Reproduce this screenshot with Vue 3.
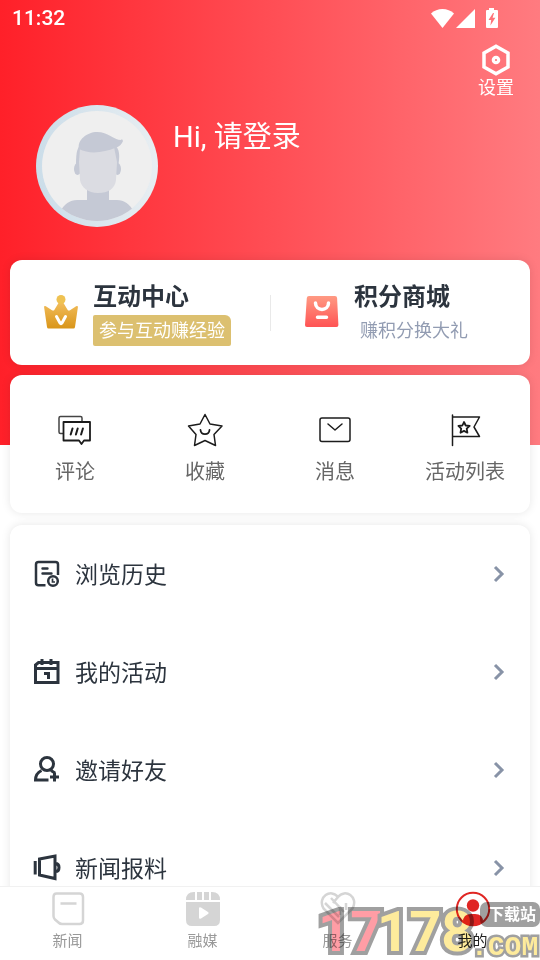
<script setup>
const shortcuts = [
  { id: 'comment', label: '评论' },
  { id: 'favorite', label: '收藏' },
  { id: 'message', label: '消息' },
  { id: 'activity', label: '活动列表' },
]

const menu = [
  { id: 'history', label: '浏览历史' },
  { id: 'calendar', label: '我的活动' },
  { id: 'invite', label: '邀请好友' },
  { id: 'report', label: '新闻报料' },
]

const tabs = [
  { id: 'news', label: '新闻' },
  { id: 'media', label: '融媒' },
  { id: 'service', label: '服务' },
  { id: 'mine', label: '我的' },
]
</script>

<template>
  <div class="app">
    <main class="content">
      <div class="status">
        <span>11:32</span>
        <svg width="68" height="20" viewBox="0 0 68 20" fill="#fff" aria-hidden="true">
          <path d="M0 5.500C6-.6 17-.6 23 5.500L11.500 20z" />
          <path d="M44 1v19H25z" />
          <path fill-rule="evenodd" d="M58 0h5v2h3q1 0 1 1v16q0 1-1 1H56q-1 0-1-1V3q0-1 1-1h2zM62 5l-4.500 7h2.700l-.8 5.500 5-7.800h-2.800l1.400-4.700z" />
        </svg>
      </div>

      <header class="header">
        <button class="settings" type="button">
          <svg width="30" height="32" viewBox="0 0 30 32" fill="none" stroke="#fff" aria-hidden="true">
            <path stroke-width="3.500" d="M15 2.200 27 9v14L15 29.800 3 23V9z" />
            <circle cx="15" cy="16" r="2.700" stroke-width="3.200" />
          </svg>
          <span>设置</span>
        </button>
        <a class="profile" href="#login">
          <svg class="avatar" width="122" height="122" viewBox="0 0 122 122" aria-hidden="true">
            <defs>
              <linearGradient id="ring" x1="0" x2="1">
                <stop offset="0" stop-color="#cbdde9" />
                <stop offset="1" stop-color="#e8eef2" />
              </linearGradient>
              <clipPath id="face"><circle cx="61" cy="61" r="55" /></clipPath>
            </defs>
            <circle cx="61" cy="61" r="61" fill="url(#ring)" />
            <circle cx="61" cy="61" r="55" fill="#efefef" />
            <g clip-path="url(#face)" fill="#c5c9d5">
              <path d="M51 80h22v15h8c7 0 13 4 17 12v13H24v-13c4-8 10-12 17-12h10z" />
              <ellipse cx="41.500" cy="64" rx="3.500" ry="6" />
              <ellipse cx="81.500" cy="64" rx="3.500" ry="6" />
              <path d="M40 62c0-11 0-18 5-23h33c6 5 6 12 4 23z" />
              <path fill="#dbdce2" d="M44 43c12 4 24 2 34-1l3 15-1 18c-1 9-8 13-18 13s-17-6-18-13l-1-18z" />
              <path d="M43 44c-2-9 8-17 18-17 11 0 17 8 24 8l1-1 1 2-1 2c-2 3-4 4-7 5-10 4-25 7-36 1z" />
            </g>
          </svg>
          <span class="greeting">Hi, 请登录</span>
        </a>
      </header>

      <section class="card promos">
        <a class="promo" href="#interact">
          <svg width="36" height="36" viewBox="0 0 36 36" aria-hidden="true">
            <defs>
              <linearGradient id="gold" x2="0" y2="1">
                <stop offset="0" stop-color="#f2bd5b" />
                <stop offset="1" stop-color="#d99519" />
              </linearGradient>
            </defs>
            <path fill="url(#gold)" d="M1 11.500q1-1 3 .4l5 3.400q1.500.8 2.300-.4l4.500-7.400h4.400l4.500 7.400q.8 1.200 2.300.4l5-3.400q2-1.400 3-.4L32 32q-.2 1.500-1.500 1.500h-25Q4.200 33.500 4 32z" />
            <circle cx="18" cy="4.500" r="4.500" fill="#efc252" />
            <path d="M13.500 21.500 17 28q1 1.500 2 0l3.500-6.500" fill="none" stroke="#fff" stroke-width="3" stroke-linecap="round" />
          </svg>
          <span class="promo-text">
            <strong>互动中心</strong>
            <span class="badge">参与互动赚经验</span>
          </span>
        </a>
        <a class="promo" href="#mall">
          <svg width="36" height="36" viewBox="0 0 36 36" aria-hidden="true">
            <defs>
              <linearGradient id="coral" x2="0" y2="1">
                <stop offset="0" stop-color="#ff9a83" />
                <stop offset="1" stop-color="#ff5354" />
              </linearGradient>
            </defs>
            <path fill="url(#coral)" d="M5 1h26q2 0 2.100 2l1.300 27q.1 2-2 2H3q-2.100 0-2-2L2.800 3Q3 1 5 1z" />
            <path d="M11.500 8c0 8.500 13 8.500 13 0M13.500 22.300h9" fill="none" stroke="#fff" stroke-width="3.500" stroke-linecap="round" />
          </svg>
          <span class="promo-text">
            <strong>积分商城</strong>
            <span class="note">赚积分换大礼</span>
          </span>
        </a>
      </section>

      <nav class="card shortcuts" aria-label="快捷入口">
        <a v-for="item in shortcuts" :key="item.id" :href="'#' + item.id">
          <svg width="36" height="34" viewBox="0 0 36 34" fill="none" stroke="#1c1c1c" stroke-width="1.500" stroke-linejoin="round" stroke-linecap="round" aria-hidden="true">
            <template v-if="item.id === 'comment'">
              <path stroke="#444" d="M6 20.500H3.500q-1.500 0-1.500-1.500V5q0-1.500 1.500-1.500h20q1.500 0 1.500 1.500v4" />
              <path stroke-width="1.800" d="M6.500 9H33v18.500h-6L24.500 31 22 27.500H6.500z" />
              <path stroke-width="2" d="m15.500 15.500-1.800 6m7-6-1.800 6m7-6-1.800 6" />
            </template>
            <template v-else-if="item.id === 'favorite'">
              <path d="m18 1.500 5 9.500 12 2-8 8.500 1.500 11L18 27.500 7.500 32.500 9 21.500 1.500 13 13 11z" />
              <path d="M13.500 17c.5 5.500 8.500 5.500 9 0" stroke-width="1.800" />
            </template>
            <template v-else-if="item.id === 'message'">
              <rect x="3" y="5" width="30" height="23.500" rx="2" />
              <path d="m11 11 7 6 7-6" />
            </template>
            <template v-else>
              <path d="M5.500 2v30.500M6 4h26.500l-5.500 10 5.500 9.500H6" />
              <path stroke-width="1.800" d="m17 9 1.700 3.500 4 .4-3 2.800.7 4-3.400-1.800-3.500 1.800.7-4-2.800-2.800 4-.4z" />
            </template>
          </svg>
          <span>{{ item.label }}</span>
        </a>
      </nav>

      <nav class="card menu" aria-label="功能列表">
        <a v-for="item in menu" :key="item.id" :href="'#' + item.id">
          <svg width="28" height="28" viewBox="0 0 28 28" fill="none" stroke="#2c343e" stroke-width="3" aria-hidden="true">
            <template v-if="item.id === 'history'">
              <path stroke-width="2.500" d="M12.500 25.200H5.500q-2.500 0-2.500-2.500V4.500Q3 2 5.500 2h17Q25 2 25 4.500V15" />
              <path stroke-width="2.400" stroke-linecap="round" d="M9.500 8.500h5M9.500 13.500h9" />
              <circle cx="20" cy="21" r="4.800" stroke-width="2.500" />
              <path stroke-width="1.700" d="M19.500 18.500V22H22" />
            </template>
            <template v-else-if="item.id === 'calendar'">
              <path d="M2.500 24.500V7L5.500 4.500H25v20zM2 10.500h23M9 1v6M18 1v6" />
              <path d="M11 15.500h4.500V21" />
            </template>
            <template v-else-if="item.id === 'invite'">
              <circle cx="14" cy="8" r="6.500" />
              <path d="M8.500 14.500C4.500 16.500 2.500 19 2.500 24h13M18 14.500l4 2.500M21.500 16.500v9M17 21h9" />
            </template>
            <template v-else>
              <path d="M2.200 7v13.500M6.500 5 22 2v22.500L6.500 21zM22.500 9.500q3.500 0 3.500 4t-3.500 4" />
            </template>
          </svg>
          <span class="menu-label">{{ item.label }}</span>
          <svg class="chevron" width="12" height="18" viewBox="0 0 12 18" fill="none" stroke="#8893a7" stroke-width="3" aria-hidden="true">
            <path d="m2 2 7 7-7 7" />
          </svg>
        </a>
      </nav>
    </main>

    <nav class="tabs" aria-label="主导航">
      <a v-for="tab in tabs" :key="tab.id" :href="'#' + tab.id" :class="{ active: tab.id === 'mine' }">
        <svg width="36" height="36" viewBox="0 0 36 36" fill="none" stroke="#d5d5d5" stroke-width="2.500" aria-hidden="true">
          <template v-if="tab.id === 'news'">
            <path d="M6.500 2.500h23q3.500 0 3.500 3.500v23.500q0 3.500-3.500 3.500H12q-2 0-3.500-1.500L5 28.500Q3.500 27 3.500 25V6q0-3.500 3-3.500zM10.500 12.500h16" />
          </template>
          <g v-else-if="tab.id === 'media'" fill="#d5d5d5" stroke="none">
            <path d="M1 9q0-8 8-8h1v8zM12 1h5v8h-5zM19 1h5v8h-5zM26 1h1q8 0 8 8h-9z" />
            <path fill-rule="evenodd" d="M1 11h34v18q0 6-6 6H7q-6 0-6-6zM14 17.500v9q0 2 2 1l7-4.500q1.500-1 0-2l-7-4.500q-2-1-2 1z" />
          </g>
          <template v-else-if="tab.id === 'service'">
            <path d="M18 32 3.500 17.500C-3 6 11-3 18 6c7-9 21 0 14.500 11.500zM5 12l14 14M11 7l13 14M18 6l-5 6M20 15v9M26 12v7" />
          </template>
          <template v-else>
            <circle cx="18" cy="18" r="16.200" stroke="#e02623" stroke-width="2" />
            <circle cx="18" cy="14.500" r="6.200" fill="#e02623" stroke="none" />
            <path fill="#e02623" stroke="none" d="M8 31q0-8 8-8h4q8 0 8 8-10 7-20 0z" />
          </template>
        </svg>
        <span>{{ tab.label }}</span>
      </a>

      <svg class="watermark" width="224" height="62" viewBox="0 0 224 62" aria-hidden="true">
        <g class="digits">
          <text x="2" y="53" class="pink">17</text>
          <text x="61" y="53" class="yellow">178</text>
        </g>
        <rect x="164" y="4" width="60" height="25" rx="7" fill="#a0a0a0" />
        <text x="172" y="22" class="site">下载站</text>
        <text x="155" y="57" class="com yellow">.COM</text>
      </svg>
    </nav>
  </div>
</template>

<style>
body {
  margin: 0;
}
</style>

<style scoped>
.app {
  display: flex;
  flex-direction: column;
  height: 100vh;
  background: #fff;
  color: #2c343e;
  font-family: Roboto, "Noto Sans CJK SC", sans-serif;
}

a {
  color: inherit;
  text-decoration: none;
}

svg {
  flex: none;
}

.content {
  flex: 1;
  min-height: 0;
  overflow-y: auto;
  scrollbar-width: none;
  background: linear-gradient(90deg, #ff2029, #ff7b80) top / 100% 445px no-repeat;
}

.status {
  display: flex;
  align-items: center;
  justify-content: space-between;
  height: 36px;
  padding: 0 41px 0 12px;
  color: #fff;
  font-size: 21px;
  font-weight: 500;
}

.header {
  display: flex;
  flex-direction: column;
  height: 224px;
  color: #fff;
}

.settings {
  display: flex;
  flex-direction: column;
  align-items: center;
  align-self: flex-end;
  margin: 8px 26px 0 0;
  padding: 0;
  border: 0;
  background: none;
  color: inherit;
  font: inherit;
  font-size: 18px;
  line-height: 24px;
}

.profile {
  display: flex;
  gap: 15px;
  margin: 5px 36px 0;
}

.greeting {
  padding-top: 11px;
  font-size: 29px;
  line-height: 42px;
}

.card {
  margin: 0 10px 10px;
  border-radius: 12px;
  background: #fff;
  box-shadow: 0 0 10px rgba(0, 0, 0, 0.1);
}

.promos {
  display: grid;
  grid-template-columns: 1fr 1fr;
  height: 105px;
}

.promo {
  display: flex;
  gap: 14px;
  align-items: center;
  padding-left: 33px;
}

.promo + .promo {
  padding-left: 34px;
  background: linear-gradient(#e9e9e9, #e9e9e9) left center / 1px 36px no-repeat;
}

.promo-text {
  display: flex;
  flex-direction: column;
  align-items: flex-start;
}

.promo-text strong {
  font-size: 24px;
  line-height: 36px;
}

.badge,
.note {
  padding: 1px 6px 0;
  font-size: 18px;
  line-height: 30px;
}

.badge {
  border-radius: 2px 6px 2px 2px;
  background: #dcc070;
  color: #fff;
}

.note {
  color: #929cb2;
}

.shortcuts {
  display: grid;
  grid-template-columns: repeat(4, 1fr);
  height: 138px;
  margin-bottom: 12px;
}

.shortcuts a {
  display: flex;
  flex-direction: column;
  gap: 10px;
  align-items: center;
  padding-top: 38px;
  color: #666;
  font-size: 20px;
  line-height: 30px;
}

.menu a {
  display: flex;
  gap: 14px;
  align-items: center;
  height: 98px;
  padding: 0 25px 0 23px;
  font-size: 23px;
}

.menu-label {
  padding-bottom: 2px;
}

.chevron {
  margin-left: auto;
}

.tabs {
  position: relative;
  display: grid;
  grid-template-columns: repeat(4, 1fr);
  height: 73px;
  border-top: 1px solid #f1f1f1;
  background: #fff;
}

.tabs a {
  display: flex;
  flex-direction: column;
  align-items: center;
  padding-top: 4px;
  color: #999;
  font-size: 15px;
  line-height: 28px;
}

.tabs .active {
  color: #222;
}

.watermark {
  position: absolute;
  right: 0;
  bottom: 0;
  mix-blend-mode: multiply;
  pointer-events: none;
}

.digits,
.com {
  font-weight: 700;
  paint-order: stroke;
  stroke: #a0a0a0;
  stroke-linejoin: miter;
}

.digits {
  font-family: Roboto, sans-serif;
  font-size: 56px;
  stroke-width: 8px;
}

.com {
  font-family: "Liberation Mono", monospace;
  font-size: 28px;
  stroke-width: 5px;
}

.site {
  fill: #fff;
  font-size: 16px;
  font-weight: 700;
}

.pink {
  fill: #ff9da5;
}

.yellow {
  fill: #feeb9c;
}
</style>
